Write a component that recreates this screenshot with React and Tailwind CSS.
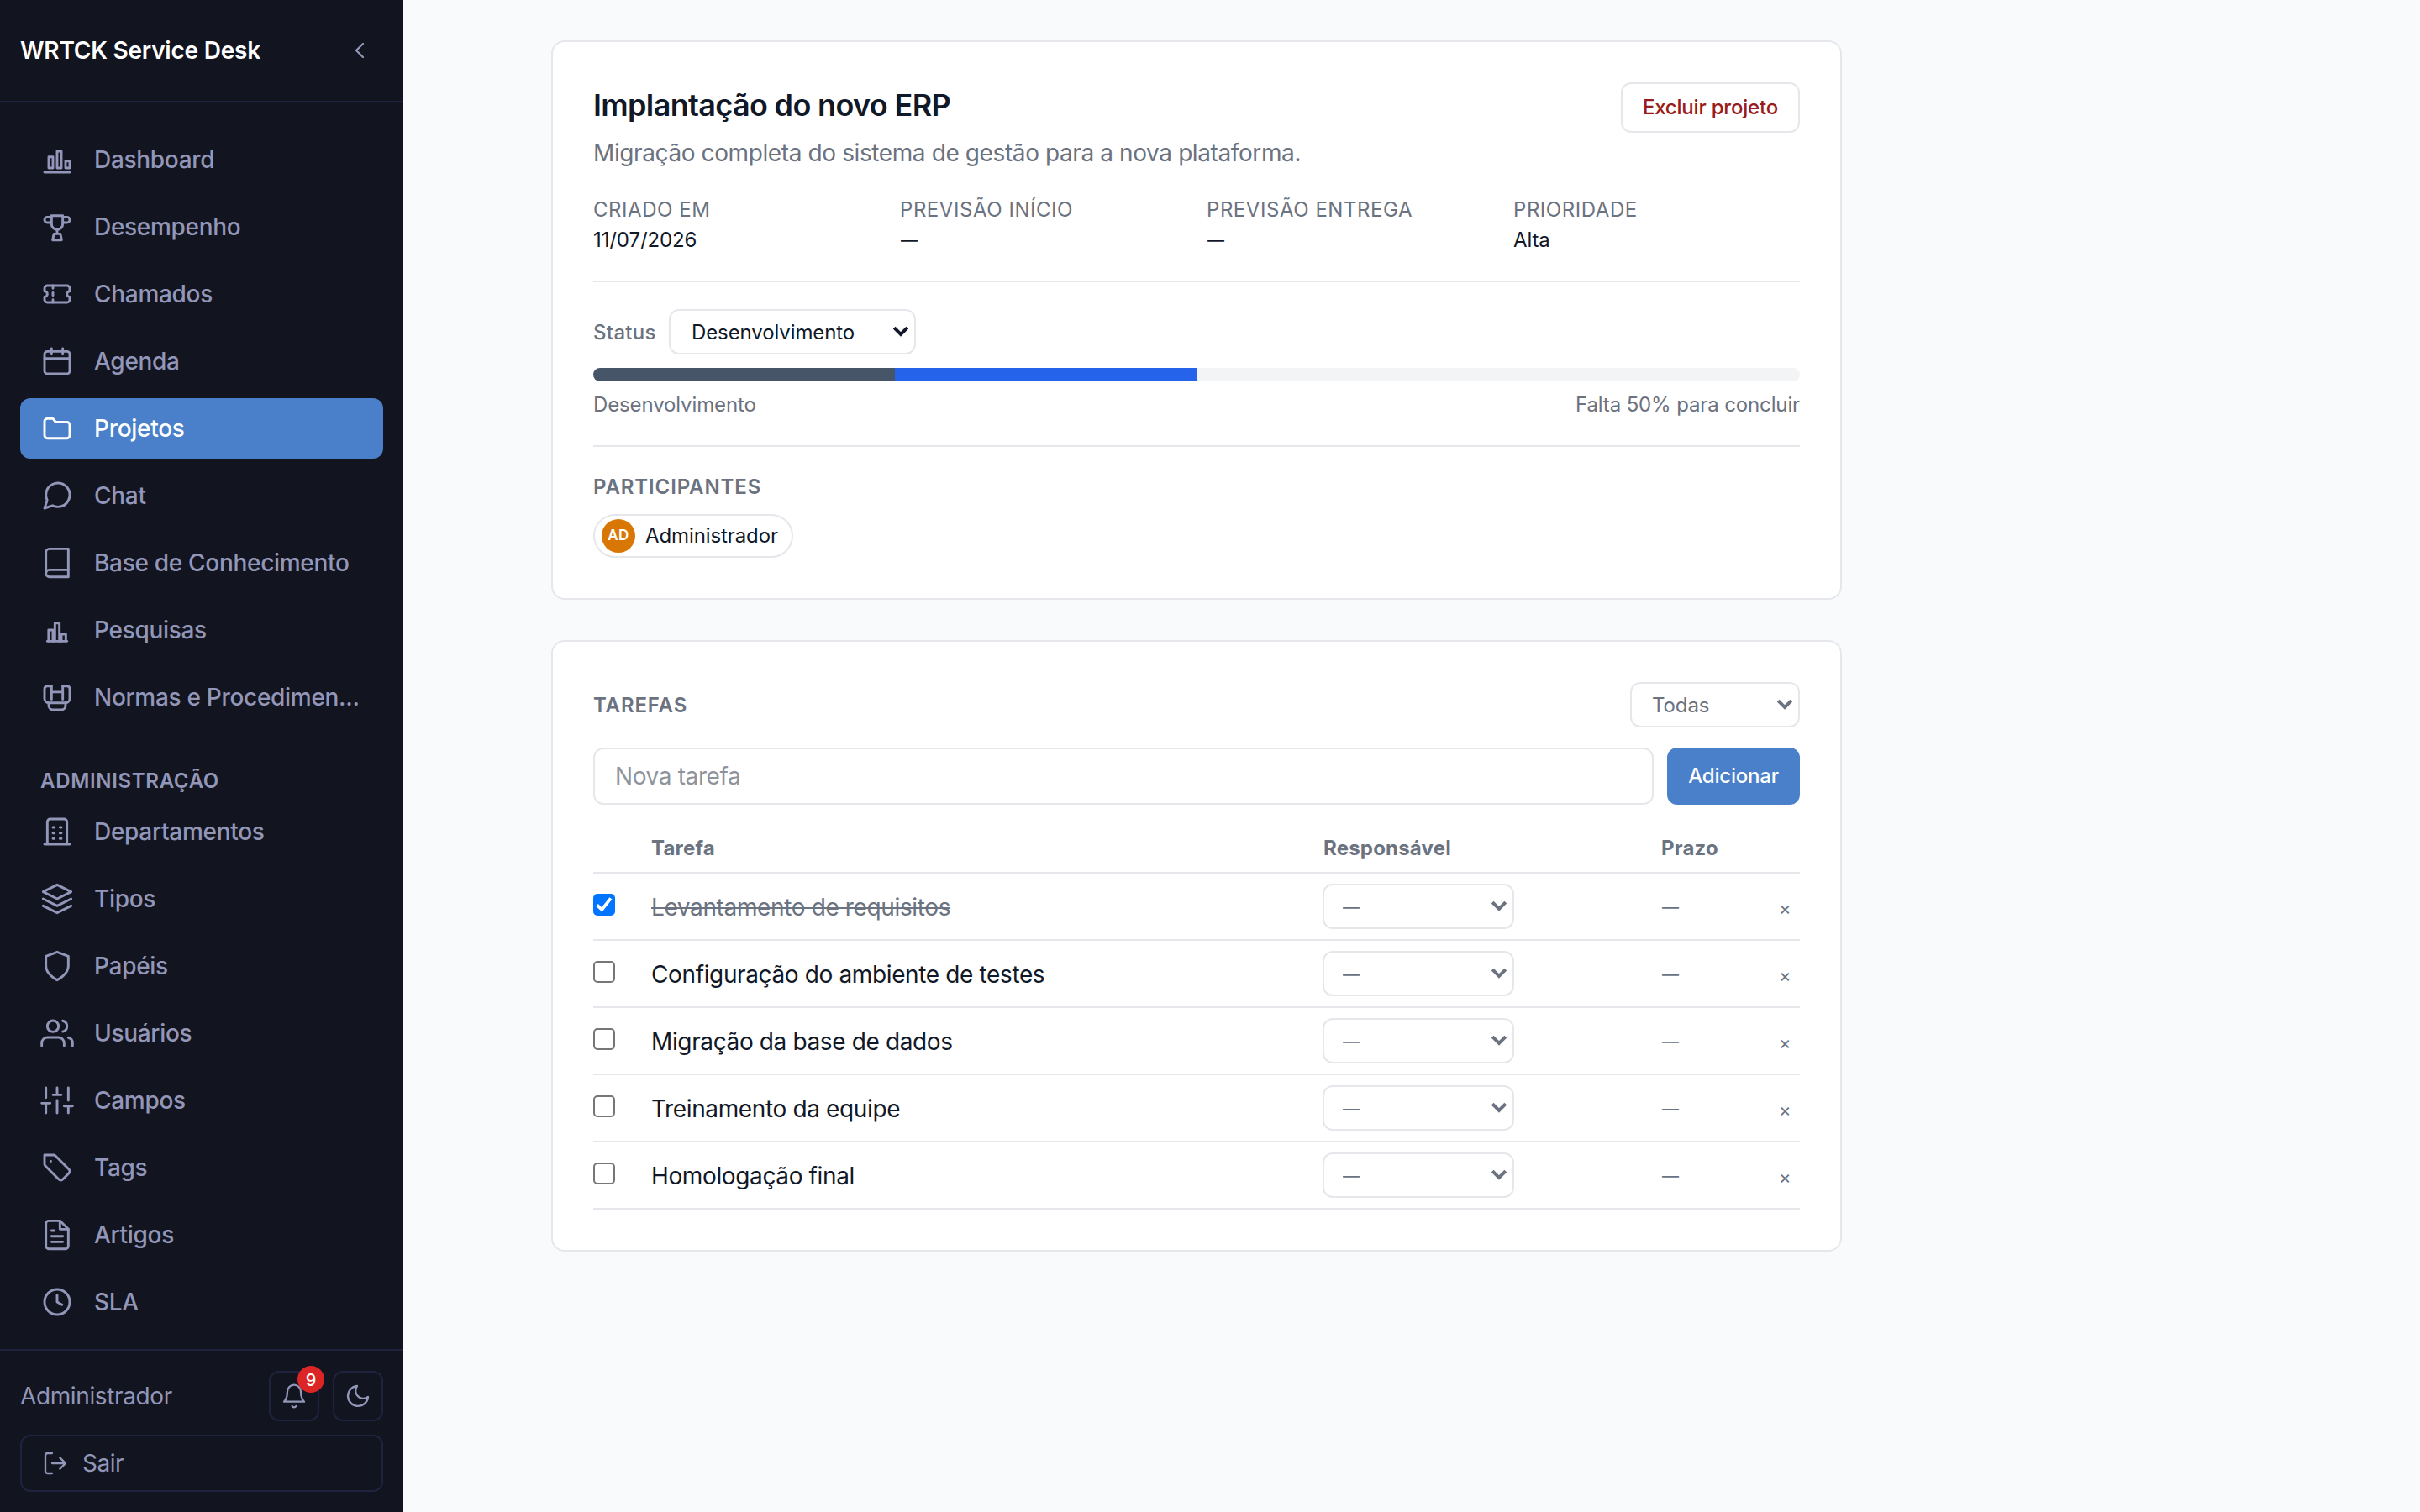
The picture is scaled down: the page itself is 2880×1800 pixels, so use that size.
import React from "react";

const ICONS = {
  dashboard: (
    <>
      <path d="M3 21h18" />
      <rect x="6" y="10" width="3" height="8" />
      <rect x="12" y="6" width="3" height="12" />
      <rect x="18" y="13" width="3" height="5" />
    </>
  ),
  trophy: (
    <>
      <path d="M8 4h8v6a4 4 0 0 1-8 0z" />
      <path d="M8 5H5a2 2 0 0 0 0 4h3M16 5h3a2 2 0 0 1 0 4h-3" />
      <path d="M12 14v3M9.7 17h4.6l.9 4.4H8.8z" />
    </>
  ),
  ticket: (
    <>
      <path d="M5 6h14a2 2 0 0 1 2 2v2a2 2 0 0 0 0 4v2a2 2 0 0 1-2 2H5a2 2 0 0 1-2-2v-2a2 2 0 0 0 0-4V8a2 2 0 0 1 2-2z" />
      <path d="M9 6v2M9 11v2M9 16v2" />
    </>
  ),
  calendar: (
    <>
      <rect x="3" y="5" width="18" height="16" rx="2" />
      <path d="M3 10h18M8 3v4M16 3v4" />
    </>
  ),
  folder: <path d="M3 7a2 2 0 0 1 2-2h3.6a1 1 0 0 1 .8.4L11 7.5h8a2 2 0 0 1 2 2V17a2 2 0 0 1-2 2H5a2 2 0 0 1-2-2z" />,
  chat: (
    <path d="M21 11.5a8.38 8.38 0 0 1-.9 3.8 8.5 8.5 0 0 1-7.6 4.7 8.38 8.38 0 0 1-3.8-.9L3 21l1.9-5.7a8.38 8.38 0 0 1-.9-3.8 8.5 8.5 0 0 1 4.7-7.6 8.38 8.38 0 0 1 3.8-.9h.5a8.48 8.48 0 0 1 8 8z" />
  ),
  book: (
    <>
      <path d="M4 19.5A2.5 2.5 0 0 1 6.5 17H20" />
      <path d="M6.5 2H20v20H6.5A2.5 2.5 0 0 1 4 19.5v-15A2.5 2.5 0 0 1 6.5 2z" />
    </>
  ),
  survey: (
    <>
      <path d="M5 20h14" />
      <path d="M5.9 20v-8H9v8M10.4 20V7h3.2v13M15 20v-5h3.2v5" />
    </>
  ),
  norms: (
    <>
      <path d="M8 4H5a2 2 0 0 0-2 2v7a3 3 0 0 0 3 3h12a3 3 0 0 0 3-3V6a2 2 0 0 0-2-2h-3" />
      <path d="M8 4v9.5M16 4v9.5M8 8.3h8" />
      <path d="M6 16v2a3 3 0 0 0 3 3h6a3 3 0 0 0 3-3v-2" />
    </>
  ),
  building: (
    <>
      <path d="M3 21h18M5 21V5a2 2 0 0 1 2-2h10a2 2 0 0 1 2 2v16" />
      <path d="M9 9h1M14 9h1M9 13h1M14 13h1M9 17h1M14 17h1" />
    </>
  ),
  layers: (
    <>
      <path d="M12 2 2 7l10 5 10-5z" />
      <path d="m2 17 10 5 10-5M2 12l10 5 10-5" />
    </>
  ),
  shield: <path d="M12 22s8-4 8-10V5l-8-3-8 3v7c0 6 8 10 8 10z" />,
  users: (
    <>
      <path d="M17 21v-2a4 4 0 0 0-4-4H5a4 4 0 0 0-4 4v2" />
      <circle cx="9" cy="7" r="4" />
      <path d="M23 21v-2a4 4 0 0 0-3-3.87M16 3.13a4 4 0 0 1 0 7.75" />
    </>
  ),
  sliders: <path d="M4 21v-7M4 10V3M12 21v-9M12 8V3M20 21v-5M20 12V3M1 14h6M9 8h6M17 16h6" />,
  tag: (
    <>
      <path d="M3 3h6.4a2 2 0 0 1 1.4.6l9.6 9.6a2 2 0 0 1 0 2.8L16 20.4a2 2 0 0 1-2.8 0L3.6 10.8A2 2 0 0 1 3 9.4z" />
      <path d="M7.5 7.5h.01" />
    </>
  ),
  file: (
    <>
      <path d="M14 2H6a2 2 0 0 0-2 2v16a2 2 0 0 0 2 2h12a2 2 0 0 0 2-2V8z" />
      <path d="M14 2v6h6M16 13H8M16 17H8M10 9H8" />
    </>
  ),
  clock: (
    <>
      <circle cx="12" cy="12" r="9" />
      <path d="M12 7v5l3.5 2" />
    </>
  ),
  bell: (
    <>
      <path d="M18 8A6 6 0 0 0 6 8c0 7-3 9-3 9h18s-3-2-3-9" />
      <path d="M13.73 21a2 2 0 0 1-3.46 0" />
    </>
  ),
  moon: <path d="M21 12.79A9 9 0 1 1 11.21 3 7 7 0 0 0 21 12.79z" />,
  logout: <path d="M9 21H5a2 2 0 0 1-2-2V5a2 2 0 0 1 2-2h4M16 17l5-5-5-5M21 12H9" />,
  collapse: <path d="m15 18-6-6 6-6" />,
};

function Icon({ name, className }) {
  return (
    <svg
      viewBox="0 0 24 24"
      fill="none"
      stroke="currentColor"
      strokeWidth="1.75"
      strokeLinecap="round"
      strokeLinejoin="round"
      className={`shrink-0 overflow-visible ${className}`}
    >
      {ICONS[name]}
    </svg>
  );
}

const MAIN_NAV = [
  ["dashboard", "Dashboard"],
  ["trophy", "Desempenho"],
  ["ticket", "Chamados"],
  ["calendar", "Agenda"],
  ["folder", "Projetos"],
  ["chat", "Chat"],
  ["book", "Base de Conhecimento"],
  ["survey", "Pesquisas"],
  ["norms", "Normas e Procedimen..."],
];

const ADMIN_NAV = [
  ["building", "Departamentos"],
  ["layers", "Tipos"],
  ["shield", "Papéis"],
  ["users", "Usuários"],
  ["sliders", "Campos"],
  ["tag", "Tags"],
  ["file", "Artigos"],
  ["clock", "SLA"],
];

function NavItem({ icon, label, active }) {
  return (
    <a
      className={`flex h-[72px] items-center gap-6 rounded-xl px-6 text-[28px] font-medium tracking-[-0.3px] whitespace-nowrap ${
        active ? "bg-[#4a80c9] text-white" : ""
      }`}
    >
      <Icon name={icon} className="size-10" />
      {label}
    </a>
  );
}

function Sidebar() {
  return (
    <aside className="flex h-full w-[480px] shrink-0 flex-col bg-[#12141f] text-[#9296b8]">
      <header className="flex h-[122px] items-center justify-between border-b-2 border-[#20233f] pr-9 pl-6">
        <h1 className="text-[28px] font-semibold tracking-[-0.22px] text-white">WRTCK Service Desk</h1>
        <Icon name="collapse" className="size-8" />
      </header>
      <nav className="flex flex-1 flex-col gap-2 px-6 pt-8">
        {MAIN_NAV.map(([icon, label]) => (
          <NavItem key={label} icon={icon} label={label} active={label === "Projetos"} />
        ))}
        <h2 className="mt-[38px] -mb-0.5 px-6 text-2xl leading-9 font-semibold tracking-[0.68px]">ADMINISTRAÇÃO</h2>
        {ADMIN_NAV.map(([icon, label]) => (
          <NavItem key={label} icon={icon} label={label} />
        ))}
      </nav>
      <footer className="flex h-[194px] flex-col gap-4 border-t-2 border-[#20233f] px-6 pt-6">
        <div className="flex items-center gap-4">
          <span className="flex-1 text-[28px] tracking-[-0.38px]">Administrador</span>
          <button className="relative flex size-[60px] items-center justify-center rounded-xl border-2 border-[#20233f]">
            <Icon name="bell" className="size-8" />
            <span className="absolute -top-2 -right-2 flex size-8 items-center justify-center rounded-full bg-[#dc2626] pt-0.5 text-xl leading-8 font-medium text-white">
              9
            </span>
          </button>
          <button className="flex size-[60px] items-center justify-center rounded-xl border-2 border-[#20233f]">
            <Icon name="moon" className="size-8" />
          </button>
        </div>
        <button className="flex h-[68px] items-center gap-4 rounded-xl border-2 border-[#20233f] px-6 text-[28px] tracking-[-0.5px]">
          <Icon name="logout" className="size-8" />
          Sair
        </button>
      </footer>
    </aside>
  );
}

function Select({ value, className }) {
  return (
    <div className={`relative h-[54px] ${className}`}>
      <select className="size-full appearance-none rounded-xl border-2 border-[#e5e7eb] bg-white pt-0.5 tracking-[-0.1px]">
        <option>{value}</option>
      </select>
      <svg
        viewBox="0 0 20 14"
        fill="none"
        stroke="currentColor"
        strokeWidth="4"
        className="pointer-events-none absolute top-5 right-2 h-3.5 w-5"
      >
        <path d="m2.2 2.2 7.8 7.8 7.8-7.8" />
      </svg>
    </div>
  );
}

const META = [
  ["CRIADO EM", "11/07/2026"],
  ["PREVISÃO INÍCIO", "—"],
  ["PREVISÃO ENTREGA", "—"],
  ["PRIORIDADE", "Alta"],
];

function ProjectCard() {
  return (
    <section className="rounded-2xl border-2 border-[#e5e7eb] bg-white p-12">
      <div className="flex items-start justify-between">
        <div>
          <h2 className="text-4xl leading-[54px] font-semibold tracking-[-0.66px]">Implantação do novo ERP</h2>
          <p className="mt-2 text-[28px] leading-[44px] tracking-[-0.395px] text-[#6b7280]">
            Migração completa do sistema de gestão para a nova plataforma.
          </p>
        </div>
        <button className="h-[60px] rounded-xl border-2 border-[#e5e7eb] px-6 text-2xl leading-9 font-medium tracking-[-0.2px] text-[#991b1b]">
          Excluir projeto
        </button>
      </div>
      <dl className="mt-7 grid grid-cols-4 gap-6 border-b-2 border-[#e5e7eb] pb-[30px] text-2xl leading-9">
        {META.map(([label, value]) => (
          <div key={label}>
            <dt className="tracking-[0.55px] text-[#6b7280]">{label}</dt>
            <dd className={value === "—" ? "pl-px text-xl leading-9" : "tracking-[-0.11px]"}>{value}</dd>
          </div>
        ))}
      </dl>
      <div className="mt-8 flex items-center text-2xl leading-9">
        <span className="w-[90px] pt-0.5 font-medium tracking-[0.3px] text-[#6b7280]">Status</span>
        <Select value="Desenvolvimento" className="w-[294px] [&>select]:pl-[25px]" />
      </div>
      <div className="mt-4 flex h-4 overflow-hidden rounded-full bg-[#f3f4f6]">
        <div className="w-1/4 bg-[#475569]" />
        <div className="w-1/4 bg-[#2563eb]" />
      </div>
      <div className="mt-2.5 flex justify-between border-b-2 border-[#e5e7eb] pb-[30px] text-2xl leading-9 tracking-[-0.13px] text-[#6b7280]">
        <span>Desenvolvimento</span>
        <span>Falta 50% para concluir</span>
      </div>
      <h3 className="mt-[30px] text-2xl leading-9 font-semibold tracking-[0.88px] text-[#6b7280]">PARTICIPANTES</h3>
      <div className="mt-3.5 flex h-[52px] w-[238px] items-center gap-3 rounded-full border-2 border-[#e5e7eb] pl-2">
        <span className="flex size-10 items-center justify-center rounded-full bg-[#d97706] text-[17px] font-semibold tracking-[0.5px] text-white">
          AD
        </span>
        <span className="text-2xl leading-9 tracking-[-0.1px]">Administrador</span>
      </div>
    </section>
  );
}

const TASKS = [
  ["Levantamento de requisitos", true],
  ["Configuração do ambiente de testes", false],
  ["Migração da base de dados", false],
  ["Treinamento da equipe", false],
  ["Homologação final", false],
];

function Checkbox({ checked }) {
  return checked ? (
    <span className="block size-[26px] rounded-[5px] bg-[#0075ff]">
      <svg viewBox="0 0 26 26" fill="none" stroke="white" strokeWidth="3.8" className="size-full">
        <path d="m4.6 13.4 5.7 5.6L20.9 5.4" />
      </svg>
    </span>
  ) : (
    <span className="block size-[26px] rounded-[5px] border-2 border-[#767676] bg-white" />
  );
}

function TasksCard() {
  return (
    <section className="rounded-2xl border-2 border-[#e5e7eb] bg-white p-12 text-[#6b7280]">
      <div className="flex items-center justify-between text-2xl leading-9">
        <h3 className="pt-0.5 font-semibold tracking-[0.85px]">TAREFAS</h3>
        <Select value="Todas" className="w-[202px] [&>select]:pl-6" />
      </div>
      <div className="mt-6 flex gap-4">
        <input
          placeholder="Nova tarefa"
          className="h-[68px] flex-1 rounded-xl border-2 border-[#e5e7eb] px-6 text-[28px] tracking-[-0.38px] placeholder:text-[#8f939b]"
        />
        <button className="h-[68px] w-[158px] rounded-xl bg-[#4a80c9] text-2xl leading-9 font-medium tracking-[-0.2px] text-white">
          Adicionar
        </button>
      </div>
      <div className="mt-4 grid h-[66px] grid-cols-[69px_799px_402px_1fr] items-center border-b-2 border-[#e5e7eb] pt-2 text-2xl font-bold tracking-[0.2px]">
        <span />
        <span>Tarefa</span>
        <span className="pl-px">Responsável</span>
        <span className="pl-px">Prazo</span>
      </div>
      {TASKS.map(([name, done]) => (
        <div
          key={name}
          className="grid h-20 grid-cols-[69px_799px_402px_1fr_25px] items-center border-b-2 border-[#e5e7eb]"
        >
          <span className="pb-1">
            <Checkbox checked={done} />
          </span>
          <span
            className={`pt-0.5 text-[28px] leading-[42px] tracking-[-0.37px] ${
              done ? "line-through decoration-2" : "text-[#111827]"
            }`}
          >
            {name}
          </span>
          <Select value="—" className="w-[228px] [&>select]:pl-[22px] [&>select]:text-xl" />
          <span className="pt-0.5 pl-0.5 text-xl">—</span>
          <span className="pt-[5px] text-[22px]">×</span>
        </div>
      ))}
    </section>
  );
}

export default function App() {
  return (
    <div className="flex h-[1800px] w-[2880px] overflow-hidden bg-[#f9fafc] font-[Inter,sans-serif] text-[#111827]">
      <Sidebar />
      <main className="ml-44 flex w-[1536px] shrink-0 flex-col gap-12 pt-12">
        <ProjectCard />
        <TasksCard />
      </main>
    </div>
  );
}
